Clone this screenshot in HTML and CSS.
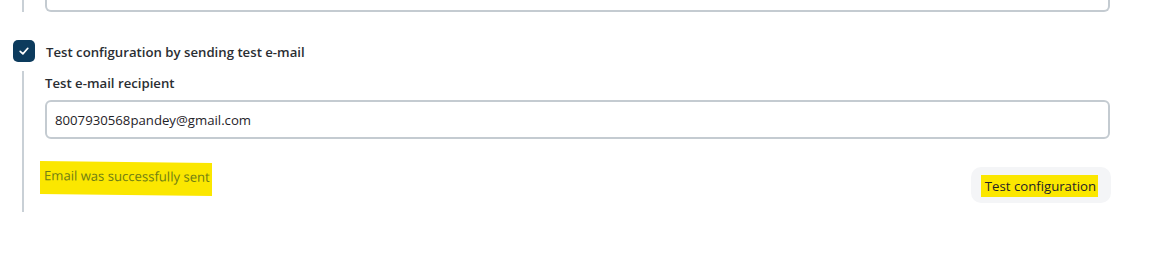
FILE: index.html
```html
<!DOCTYPE html>
<html lang="en">
<head>
<meta charset="utf-8">
<title>Test configuration</title>
<link rel="stylesheet" href="styles.css">
</head>
<body>
<div class="page">
  <div class="prev-section">
    <div class="prev-input"></div>
  </div>

  <label class="check-row">
    <span class="checkbox">
      <svg width="14" height="14" viewBox="0 0 14 14" aria-hidden="true">
        <path d="M3.2 7.3 L5.9 9.9 L10.8 4.3" fill="none" stroke="#ffffff" stroke-width="1.7" stroke-linecap="round" stroke-linejoin="round"/>
      </svg>
    </span>
    <span class="check-label">Test configuration by sending test e-mail</span>
  </label>

  <div class="nested">
    <div class="field-label">Test e-mail recipient</div>
    <div class="text-input">8007930568pandey@gmail.com</div>
    <div class="footer-row">
      <span class="status"><span class="mark mark-status">Email was successfully sent</span></span>
      <button class="btn" type="button"><span class="mark mark-btn">Test configuration</span></button>
    </div>
  </div>
</div>
</body>
</html>
```

FILE: styles.css
```css
* { box-sizing: border-box; }
html, body { margin: 0; padding: 0; background: #ffffff; }
body {
  font-family: "Open Sans", "Noto Sans", "Liberation Sans", sans-serif;
  color: #1f2328;
  width: 1165px;
  height: 276px;
  overflow: hidden;
}
.page { padding: 0 55px 0 0; }

.prev-section {
  margin-left: 22px;
  border-left: 2px solid #c9d0d6;
  padding-left: 21px;
  height: 12px;
}
.prev-input {
  height: 12px;
  border: 2px solid #c4cbd1;
  border-top: none;
  border-radius: 0 0 6px 6px;
}

.check-row {
  display: flex;
  align-items: center;
  gap: 11px;
  margin: 28px 0 0 13px;
  height: 22px;
}
.checkbox {
  width: 22px;
  height: 22px;
  border-radius: 5px;
  background: #0c3b5d;
  display: flex;
  align-items: center;
  justify-content: center;
}
.check-label {
  font-size: 13.2px;
  font-weight: 600;
  color: #2a2e33;
  position: relative;
  top: 1px;
}

.nested {
  margin: 9px 0 0 22px;
  border-left: 2px solid #c9d0d6;
  padding: 2px 0 0 21px;
  height: 141px;
}
.field-label {
  font-size: 13.2px;
  font-weight: 600;
  color: #2a2e33;
  line-height: 18px;
  padding-top: 1px;
}
.text-input {
  margin-top: 8px;
  height: 39px;
  border: 2px solid #c4cbd1;
  border-radius: 6px;
  padding: 0 8px;
  display: flex;
  align-items: center;
  font-size: 13.2px;
  color: #1f2328;
}
.footer-row {
  margin-top: 28px;
  display: flex;
  justify-content: space-between;
  align-items: flex-start;
}
.status {
  font-size: 13.1px;
  color: #6f7d14;
  margin-top: -5px;
  line-height: 18px;
}
.mark { background: #fbe700; }
.mark-status {
  display: inline-block;
  padding: 5px 2px 10px 4px;
  margin-left: -5px;
  transform: skewY(0.6deg);
}
.btn {
  font-family: inherit;
  font-size: 13.2px;
  color: #1f2328;
  background: #f4f5f7;
  border: none;
  border-radius: 10px;
  height: 36px;
  padding: 0 13px 0 10px;
  margin-right: -1px;
  display: flex;
  align-items: center;
}
.mark-btn {
  display: inline-block;
  padding: 2px 2px 2px 4px;
  margin-top: 2px;
}
```
